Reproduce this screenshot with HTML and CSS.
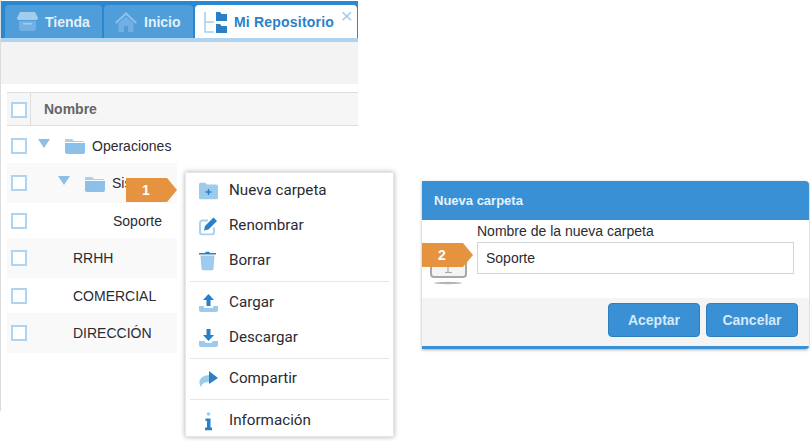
FILE: index.html
```html
<!DOCTYPE html>
<html lang="es">
<head>
<meta charset="utf-8">
<title>Mi Repositorio</title>
<link rel="stylesheet" href="styles.css">
</head>
<body>
<div class="stage">
  <section class="app">
    <nav class="tabbar">
      <div class="tab">
        <svg class="tab-icon" width="21" height="21" viewBox="0 0 21 21"><path d="M3 1h15l3 6c0 1.500-1 2-2 2H2C1 9 0 8.500 0 7z" fill="#a3cdee"/><path d="M2 10h17v7c0 2-1 3-3 3H5c-2 0-3-1-3-3z" fill="#72afe2"/><rect x="6" y="12" width="9" height="1.500" fill="#a3cdee"/></svg>
        <span>Tienda</span>
      </div>
      <div class="tab tab-wide">
        <svg class="tab-icon" width="22" height="20" viewBox="0 0 22 20"><path d="M11 0 0 10.500l1.300 1.300L11 3l9.700 8.800L22 10.500z" fill="#8fc2ea"/><path d="M3.500 11 11 4.500l7.500 6.500v9H13v-6H9v6H3.500z" fill="#72afe2"/></svg>
        <span>Inicio</span>
      </div>
      <div class="tab tab-active">
        <svg class="tab-icon" width="24" height="22" viewBox="0 0 24 22"><path d="M1 1v20h9M1 11h9" fill="none" stroke="#a9d0ef" stroke-width="1.600"/><path d="M12 1h4l1.500 2H23v7H12z" fill="#2a80c8"/><path d="M12 13h4l1.500 2H23v7H12z" fill="#2a80c8"/></svg>
        <span>Mi Repositorio</span>
        <span class="tab-close">×</span>
      </div>
    </nav>
    <div class="strip"></div>
    <div class="toolbar"></div>
    <div class="grid">
      <div class="grid-head">
        <div class="head-check"><span class="check"></span></div>
        <div class="head-name">Nombre</div>
      </div>
      <div class="row row-a">
        <span class="check"></span>
        <span class="arrow arrow-1"></span>
        <svg class="folder" width="20" height="16" viewBox="0 0 20 16"><path d="M0 1h7l2 2h10v1H0z" fill="#a9d0ef"/><path d="M0 5h20v9c0 1-.7 2-2 2H2c-1.300 0-2-1-2-2z" fill="#8cc0e8"/></svg>
        <span class="name">Operaciones</span>
      </div>
      <div class="row row-b row-zebra">
        <span class="check"></span>
        <span class="arrow arrow-2"></span>
        <svg class="folder folder-sub" width="20" height="16" viewBox="0 0 20 16"><path d="M0 1h7l2 2h10v1H0z" fill="#a9d0ef"/><path d="M0 5h20v9c0 1-.7 2-2 2H2c-1.300 0-2-1-2-2z" fill="#8cc0e8"/></svg>
        <span class="name">Sistemas</span>
      </div>
      <div class="row row-c">
        <span class="check"></span>
        <span class="name name-deep">Soporte</span>
      </div>
      <div class="row row-b row-zebra">
        <span class="check"></span>
        <span class="name name-root">RRHH</span>
      </div>
      <div class="row row-c">
        <span class="check"></span>
        <span class="name name-root">COMERCIAL</span>
      </div>
      <div class="row row-b row-zebra">
        <span class="check"></span>
        <span class="name name-root">DIRECCIÓN</span>
      </div>
    </div>
  </section>

  <section class="dialog">
    <header class="dialog-title">Nueva carpeta</header>
    <div class="dialog-body">
      <svg class="dialog-icon" width="38" height="28" viewBox="0 0 38 28"><path d="M1 1h35v14c0 2-1 3-3 3H4c-2 0-3-1-3-3z" fill="#f4f4f4" stroke="#a8a8a8" stroke-width="2"/><path d="M18 8v5M15 13.500h7" stroke="#a8a8a8" stroke-width="1.200"/><ellipse cx="18" cy="24" rx="14" ry="1.200" fill="#b4b4b4"/></svg>
      <div class="field">
        <label class="field-label" for="folder-name">Nombre de la nueva carpeta</label>
        <input class="field-input" id="folder-name" type="text" value="Soporte">
      </div>
    </div>
    <footer class="dialog-actions">
      <button class="btn" type="button">Aceptar</button>
      <button class="btn" type="button">Cancelar</button>
    </footer>
  </section>

  <ul class="menu">
    <li class="menu-item">
      <svg width="19" height="17" viewBox="0 0 19 17"><path d="M0 2c0-1 .7-2 2-2h4l2 2h9c1.300 0 2 1 2 2v11c0 1-.7 2-2 2H2c-1.300 0-2-1-2-2z" fill="#9ccbee"/><path d="M9.500 6.500v6M6.500 9.500h6" stroke="#2a80c8" stroke-width="1.400"/></svg>
      <span>Nueva carpeta</span>
    </li>
    <li class="menu-item">
      <svg width="19" height="19" viewBox="0 0 19 19"><path d="M9 4H3.500C2 4 1 5 1 6.500v9C1 17 2 18 3.500 18h9c1.500 0 2.500-1 2.500-2.500V11" fill="none" stroke="#a9d0ef" stroke-width="2"/><path d="M5 14l1-4.500L14.500 1 18 4.500 9.500 13z" fill="#2a80c8"/></svg>
      <span>Renombrar</span>
    </li>
    <li class="menu-item">
      <svg width="17" height="19" viewBox="0 0 17 19"><path d="M0 1.500h6L7 0h3l1 1.500h6V3H0z" fill="#2a80c8"/><path d="M1.500 4h14l-1 13c0 1-.8 2-2 2h-8c-1.200 0-2-1-2-2z" fill="#9ccbee"/></svg>
      <span>Borrar</span>
    </li>
    <li class="menu-sep"></li>
    <li class="menu-item">
      <svg width="19" height="18" viewBox="0 0 19 18"><path d="M9.500 0 15 6h-3.500v6h-4V6H4z" fill="#2a80c8"/><path d="M0 12h5v2h9v-2h5v4c0 1-.7 2-2 2H2c-1.300 0-2-1-2-2z" fill="#9ccbee"/></svg>
      <span>Cargar</span>
    </li>
    <li class="menu-item">
      <svg width="19" height="18" viewBox="0 0 19 18"><path d="M7.500 0h4v6H15l-5.500 6L4 6h3.500z" fill="#2a80c8"/><path d="M0 12h5l2 2h5l2-2h5v4c0 1-.7 2-2 2H2c-1.300 0-2-1-2-2z" fill="#9ccbee"/></svg>
      <span>Descargar</span>
    </li>
    <li class="menu-sep menu-sep-tight"></li>
    <li class="menu-item">
      <svg width="19" height="16" viewBox="0 0 19 16"><path d="M2 16C-2 10 2 4 11 4v7c-5 0-8 1-9 5z" fill="#9ccbee"/><path d="M10 0l9 7-9 6z" fill="#2a80c8"/></svg>
      <span>Compartir</span>
    </li>
    <li class="menu-sep"></li>
    <li class="menu-item">
      <svg width="19" height="19" viewBox="0 0 19 19"><circle cx="9.500" cy="2.500" r="1.800" fill="#9ccbee"/><path d="M6.500 7h5v9H13v3H6v-3h2V9.500H6.500z" fill="#2a80c8"/></svg>
      <span>Información</span>
    </li>
  </ul>

  <div class="tag tag-1">1</div>
  <div class="tag tag-2">2</div>
</div>
</body>
</html>
```
FILE: styles.css
```css
* { box-sizing: border-box; }

html, body {
  margin: 0;
  padding: 0;
  background: #fff;
}

body {
  width: 810px;
  height: 441px;
  overflow: hidden;
  font-family: "Liberation Sans", Arial, sans-serif;
  color: #2b2b33;
}

.stage {
  position: relative;
  display: flex;
  align-items: flex-start;
  width: 810px;
  height: 441px;
}

/* App panel */
.app {
  width: 358px;
  height: 410px;
  flex: none;
  margin-top: 1px;
  border-left: 1px solid #dcdcdc;
}

.tabbar {
  display: flex;
  align-items: flex-end;
  gap: 2px;
  height: 37px;
  padding-left: 4px;
  background: #2a88d2;
}

.tab {
  display: flex;
  align-items: center;
  gap: 7px;
  width: 97px;
  height: 33px;
  padding-left: 12px;
  border-radius: 4px 4px 0 0;
  background: #4f9dd9;
  color: #e3f0fa;
  font-size: 14px;
  font-weight: bold;
}

.tab-wide {
  width: 89px;
  padding-left: 11px;
  gap: 7px;
}

.tab-active {
  position: relative;
  flex: none;
  width: 162px;
  padding-left: 9px;
  gap: 6px;
  background: #fff;
  color: #2a80c8;
  letter-spacing: .2px;
}

.tab-icon { flex: none; }

.tab-close {
  position: absolute;
  top: 1px;
  right: 4px;
  color: #a3cdee;
  font-size: 21px;
  font-weight: normal;
  line-height: 19px;
}

.strip {
  height: 4px;
  background: #aed4f0;
}

.toolbar {
  height: 42px;
  background: #f3f3f3;
}

.grid {
  padding: 8px 0 0 6px;
}

.grid-head {
  display: flex;
  align-items: stretch;
  height: 34px;
  border-top: 1px solid #dedede;
  border-bottom: 1px solid #dedede;
  background: #f6f6f6;
}

.head-check {
  display: flex;
  align-items: center;
  width: 24px;
  padding: 2px 0 0 4px;
  border-right: 1px solid #dedede;
}

.head-name {
  padding: 8px 0 0 13px;
  color: #666;
  font-size: 14px;
  font-weight: bold;
}

.check {
  display: block;
  flex: none;
  width: 16px;
  height: 16px;
  border: 2px solid #aed4f0;
  background: #fff;
}

.row {
  position: relative;
  display: flex;
  align-items: center;
  width: 170px;
  padding-left: 4px;
  font-size: 14px;
  white-space: nowrap;
}

.row-a { height: 37px; padding-top: 2px; }
.row-b { height: 40px; }
.row-c { height: 35px; }
.row-zebra { background: #f9f9f9; }

.arrow {
  flex: none;
  width: 0;
  height: 0;
  border-left: 6px solid transparent;
  border-right: 6px solid transparent;
  border-top: 9px solid #8cc0e8;
}

.arrow-1 { margin: -4px 0 0 11px; }
.arrow-2 { margin: -6px 0 0 31px; }

.folder { flex: none; margin: 0 0 0 15px; }
.folder-sub { margin-top: 2px; }
.name { margin-left: 7px; }
.name-deep { margin-left: 86px; }
.name-root { margin-left: 46px; }

/* Dialog */
.dialog {
  display: flex;
  flex-direction: column;
  width: 387px;
  height: 168px;
  flex: none;
  margin: 181px 0 0 64px;
  border-radius: 0 4px 4px 0;
  border-bottom: 3px solid #3990d4;
  background: #fff;
  box-shadow: 0 1px 3px rgba(0, 0, 0, .35);
}

.dialog-title {
  height: 39px;
  padding: 12px 0 0 12px;
  border-radius: 0 4px 0 0;
  background: #3990d4;
  color: #e6f2fb;
  font-size: 13px;
  font-weight: bold;
}

.dialog-body {
  display: flex;
  height: 78px;
  padding: 2px 0 0 8px;
}

.dialog-icon { flex: none; margin-top: 37px; }

.field { margin-left: 9px; }

.field-label {
  display: block;
  height: 20px;
  font-size: 14px;
  line-height: 19px;
}

.field-input {
  display: block;
  width: 317px;
  height: 32px;
  padding: 0 8px;
  border: 1px solid #d4d4d4;
  background: #fff;
  color: #2b2b33;
  font-family: inherit;
  font-size: 14px;
  outline: none;
}

.dialog-actions {
  display: flex;
  justify-content: flex-end;
  gap: 6px;
  flex: 1;
  padding: 5px 11px 0 0;
  background: #f4f4f4;
}

.btn {
  width: 92px;
  height: 34px;
  padding: 0;
  border: 1px solid #2d7fbe;
  border-radius: 4px;
  background: #3990d4;
  color: #d6e9f8;
  font-family: inherit;
  font-size: 14px;
  font-weight: bold;
}

/* Context menu */
.menu {
  position: absolute;
  left: 185px;
  top: 172px;
  width: 209px;
  height: 265px;
  margin: 0;
  padding: 0 4px;
  list-style: none;
  border: 1px solid #e6e6e6;
  background: #fff;
  box-shadow: 0 0 5px rgba(0, 0, 0, .3);
  font-family: Roboto, "Liberation Sans", sans-serif;
  font-size: 15.200px;
  color: #2b2b33;
}

.menu-item {
  position: relative;
  display: flex;
  align-items: center;
  height: 35px;
  padding: 0 0 2px 39px;
}

.menu-item svg {
  position: absolute;
  left: 9px;
  top: 50%;
  transform: translateY(-50%);
}

.menu-sep {
  height: 1px;
  margin: 3px 0;
  background: #e6e6e6;
}

.menu-sep-tight { margin-bottom: 2px; }

/* Step markers */
.tag {
  position: absolute;
  width: 51px;
  height: 24px;
  padding-left: 16px;
  background: #e6933f;
  clip-path: polygon(0 0, 41px 0, 51px 50%, 41px 100%, 0 100%);
  color: #fff;
  font-size: 14px;
  font-weight: bold;
  line-height: 24px;
}

.tag-1 { left: 126px; top: 178px; }
.tag-2 { left: 422px; top: 243px; }
```
